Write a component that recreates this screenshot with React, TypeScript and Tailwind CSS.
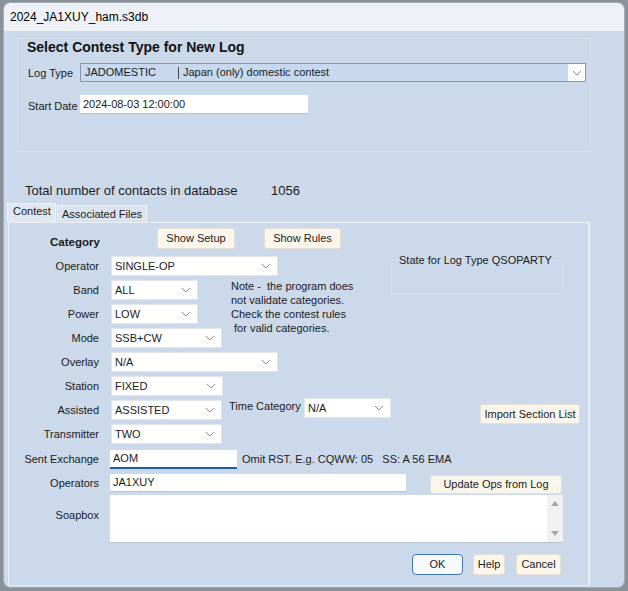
import React from "react";

// small chevron used by the combo boxes
function Chevron() {
  return (
    <svg width="10" height="6" viewBox="0 0 10 6" className="shrink-0">
      <polyline points="1,1 5,5 9,1" fill="none" stroke="#8a8f96" strokeWidth="1" />
    </svg>
  );
}

function Select({ value, w }: { value: string; w: string }) {
  return (
    <div className={`${w} h-[20px] bg-white border border-[#e1e6ec] flex items-center justify-between pl-[3px] pr-[6px]`}>
      <span>{value}</span>
      <Chevron />
    </div>
  );
}

function Btn({ label, w, h = "h-[21px]" }: { label: string; w: string; h?: string }) {
  return (
    <div className={`${w} ${h} shrink-0 bg-[#fbf6ec] border border-[#e6e1d6] rounded-[3px] flex items-center justify-center`}>
      {label}
    </div>
  );
}

function Row({ label, children }: { label: string; children: React.ReactNode }) {
  return (
    <div className="flex items-center h-[20px]">
      <div className="w-[90px] text-right shrink-0">{label}</div>
      <div className="ml-[12px] flex items-center">{children}</div>
    </div>
  );
}

export default function App() {
  return (
    <div className="w-[628px] h-[591px] bg-[#8b9199] pt-[2px] pl-[3px] pr-[3px] pb-[3px] font-['Liberation_Sans',Arial,sans-serif] text-[11px] leading-[13px] text-[#1b1b1b]">
      <div className="h-full flex flex-col rounded-[7px] overflow-hidden border border-[#a3abb5]">
        {/* Title bar */}
        <div className="h-[28px] shrink-0 bg-[#eef2f7] flex items-center pl-[6px] text-[12px] text-black">
          2024_JA1XUY_ham.s3db
        </div>

        <div className="flex-1 bg-[#cbd9ea] flex flex-col">
          {/* Contest type group */}
          <div className="mt-[7px] ml-[13px] w-[574px] h-[114px] shrink-0 border border-[#d6e0ec] flex flex-col">
            <div className="pl-[9px] text-[14px] leading-[16px] font-bold text-[#111]">
              Select Contest Type for New Log
            </div>
            <div className="mt-[8px] flex items-center">
              <div className="w-[52px] ml-[10px] shrink-0 mt-[2px]">Log Type</div>
              <div className="w-[506px] h-[19px] bg-[#c7d8ef] border border-[#8c96a3] flex items-center">
                <span className="pl-[4px] w-[97px]">JADOMESTIC</span>
                <span className="w-px h-[12px] bg-[#444]" />
                <span className="pl-[4px] flex-1">Japan (only) domestic contest</span>
                <div className="w-[17px] h-full bg-white flex items-center justify-center">
                  <Chevron />
                </div>
              </div>
            </div>
            <div className="mt-[13px] flex items-center">
              <div className="w-[52px] ml-[10px] shrink-0 mt-[3px]">Start Date</div>
              <div className="w-[228px] h-[19px] bg-white border-b border-[#b9c2cd] flex items-center pl-[3px]">
                2024-08-03 12:00:00
              </div>
            </div>
          </div>

          {/* Total contacts */}
          <div className="mt-[31px] ml-[21px] flex text-[13px] leading-[16px]">
            <span className="w-[246px]">Total number of contacts in database</span>
            <span>1056</span>
          </div>

          {/* Tabs */}
          <div className="mt-[4px] ml-[3px] flex items-end">
            <div className="w-[49px] h-[19px] bg-[#dfe7f1] border border-b-0 border-[#eef3f9] pl-[5px] pt-[1px]">Contest</div>
            <div className="ml-px w-[90px] h-[17px] bg-[#dae3ef] border border-b-0 border-[#eef3f9] pl-[4px] pt-[2px]">Associated Files</div>
          </div>

          {/* Tab panel */}
          <div className="ml-[4px] mb-px w-[582px] flex-1 border border-[#e8eef6] border-r-2 flex flex-col">
            {/* Category header */}
            <div className="mt-[5px] flex items-center h-[21px]">
              <div className="w-[148px] pl-[41px] pt-[7px] font-bold text-[11.5px]">Category</div>
              <Btn label="Show Setup" w="w-[78px]" />
              <div className="ml-[29px]">
                <Btn label="Show Rules" w="w-[77px]" />
              </div>
            </div>

            <div className="mt-[7px] flex">
              {/* Category rows */}
              <div className="w-[382px] flex flex-col gap-[4px]">
                <Row label="Operator">
                  <Select value="SINGLE-OP" w="w-[167px]" />
                </Row>
                <div className="flex">
                  <div className="w-[213px] flex flex-col gap-[4px]">
                    <Row label="Band">
                      <Select value="ALL" w="w-[87px]" />
                    </Row>
                    <Row label="Power">
                      <Select value="LOW" w="w-[87px]" />
                    </Row>
                    <Row label="Mode">
                      <Select value="SSB+CW" w="w-[111px]" />
                    </Row>
                  </div>
                  <div className="ml-[9px] -mt-px leading-[14px] whitespace-pre">
                    {"Note -  the program does\nnot validate categories.\nCheck the contest rules\n for valid categories."}
                  </div>
                </div>
                <Row label="Overlay">
                  <Select value="N/A" w="w-[167px]" />
                </Row>
                <Row label="Station">
                  <Select value="FIXED" w="w-[112px]" />
                </Row>
                <div className="flex items-start h-[20px]">
                  <div className="w-[90px] text-right shrink-0 mt-[4px]">Assisted</div>
                  <div className="ml-[12px]">
                    <Select value="ASSISTED" w="w-[111px]" />
                  </div>
                  <div className="ml-[7px] w-[75px] mt-0">Time Category</div>
                  <div className="-mt-[2px]">
                    <Select value="N/A" w="w-[87px]" />
                  </div>
                </div>
                <Row label="Transmitter">
                  <Select value="TWO" w="w-[111px]" />
                </Row>
              </div>

              {/* Right column */}
              <div className="flex flex-col">
                <div className="mt-[4px] w-[172px] h-[34px] border border-[#d5dfec]">
                  <div className="-mt-[7px] pl-[7px]">State for Log Type QSOPARTY</div>
                </div>
                <div className="mt-[110px] ml-[89px]">
                  <Btn label="Import Section List" w="w-[100px]" h="h-[20px]" />
                </div>
              </div>
            </div>

            {/* Sent exchange */}
            <div className="mt-[6px] flex items-center">
              <div className="w-[90px] text-right shrink-0">Sent Exchange</div>
              <div className="ml-[11px] w-[127px] h-[19px] bg-white border-b-2 border-[#1d5fa6] flex items-center pl-[3px]">AOM</div>
              <div className="ml-[5px] whitespace-pre">{"Omit RST. E.g. CQWW: 05   SS: A 56 EMA"}</div>
            </div>

            {/* Operators */}
            <div className="mt-[5px] flex items-start">
              <div className="w-[90px] text-right shrink-0 mt-[3px]">Operators</div>
              <div className="ml-[11px] w-[296px] h-[18px] bg-white border-b border-[#b9c2cd] flex items-center pl-[3px]">JA1XUY</div>
              <div className="ml-[24px] mt-px">
                <Btn label="Update Ops from Log" w="w-[132px]" h="h-[19px]" />
              </div>
            </div>

            {/* Soapbox */}
            <div className="mt-px flex items-start">
              <div className="w-[90px] text-right shrink-0 mt-[14px]">Soapbox</div>
              <div className="ml-[11px] w-[453px] h-[48px] bg-white border-b border-[#b9c2cd] flex justify-end">
                <div className="w-[16px] h-full bg-[#f1f1f1] flex flex-col items-center justify-between py-[6px]">
                  <svg width="8" height="5" viewBox="0 0 8 5">
                    <polygon points="0,5 4,0 8,5" fill="#a6a6a6" />
                  </svg>
                  <svg width="8" height="5" viewBox="0 0 8 5">
                    <polygon points="0,0 8,0 4,5" fill="#a6a6a6" />
                  </svg>
                </div>
              </div>
            </div>

            {/* Dialog buttons */}
            <div className="mt-[11px] ml-[403px] flex">
              <div className="w-[51px] h-[21px] bg-[#f6f8fb] border border-[#3f78b1] rounded-[4px] flex items-center justify-center">OK</div>
              <div className="ml-[10px]">
                <Btn label="Help" w="w-[32px]" />
              </div>
              <div className="ml-[11px]">
                <Btn label="Cancel" w="w-[45px]" />
              </div>
            </div>
          </div>
        </div>
      </div>
    </div>
  );
}
